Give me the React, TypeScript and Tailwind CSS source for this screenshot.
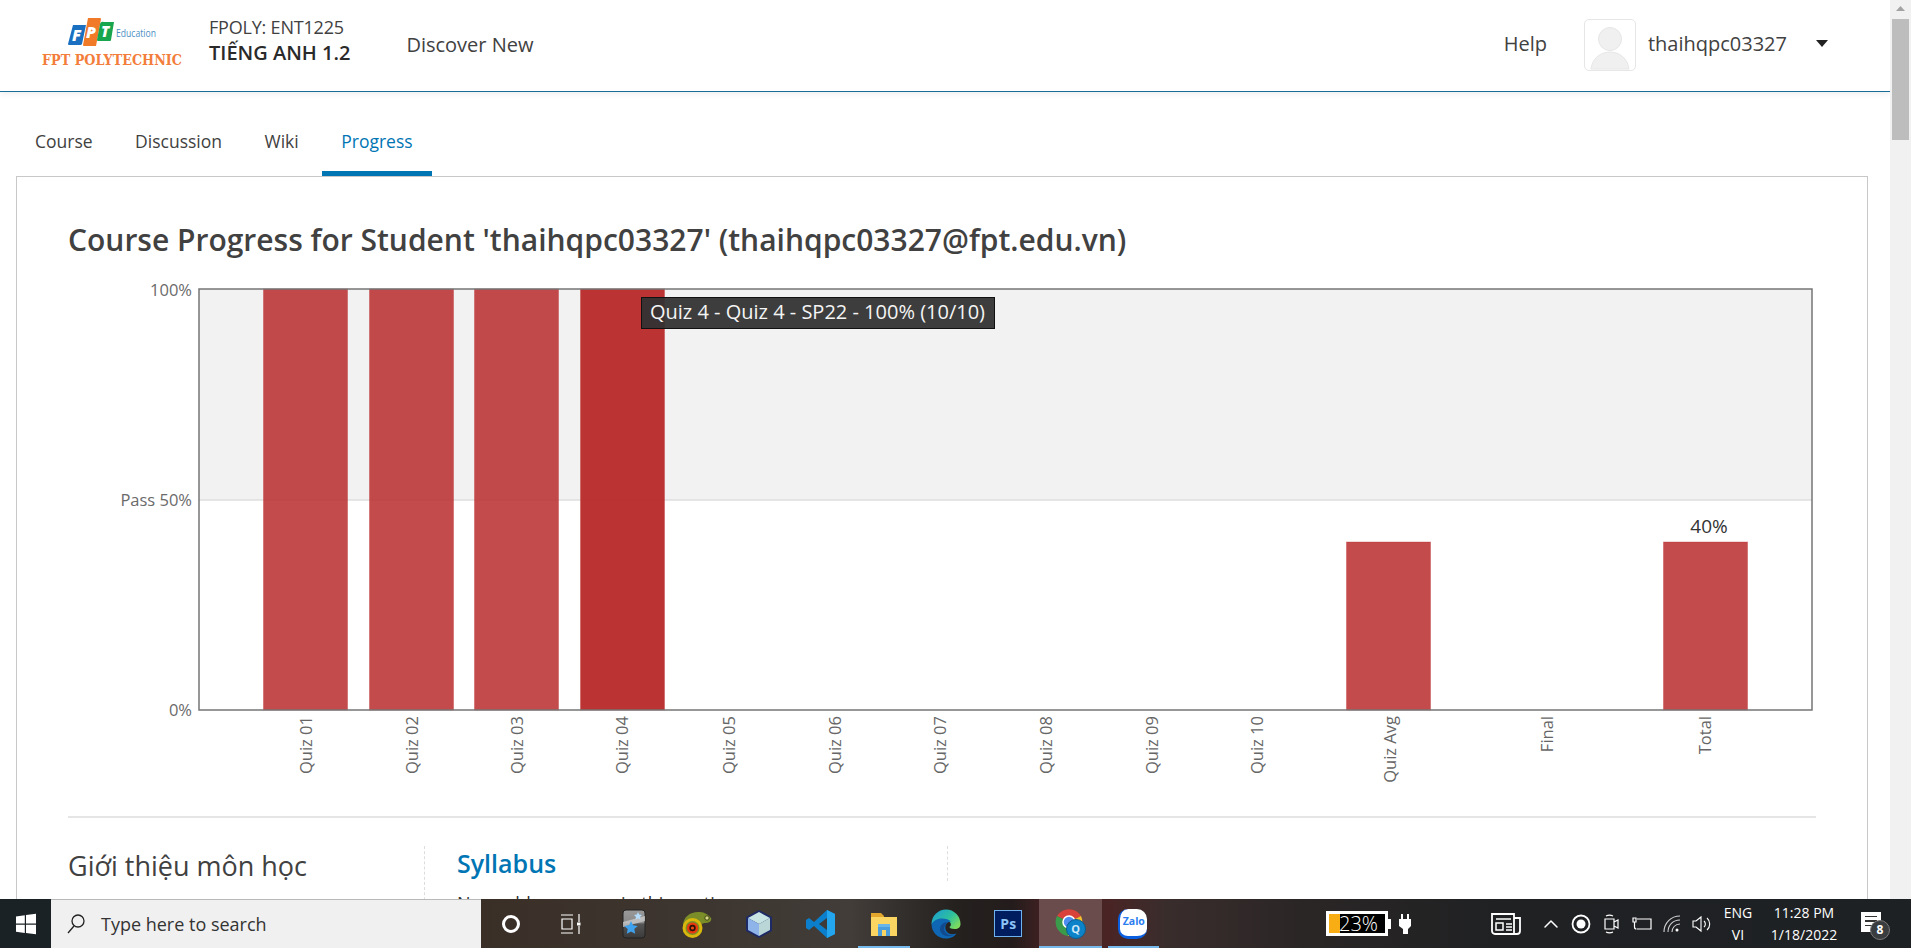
import React from 'react';
import { ChevronUp } from 'lucide-react';

const quizBars = [
  { label: 'Quiz 01', labelX: 306, x: 263, pct: 100 },
  { label: 'Quiz 02', labelX: 412, x: 369, pct: 100 },
  { label: 'Quiz 03', labelX: 517, x: 474, pct: 100 },
  { label: 'Quiz 04', labelX: 622, x: 580, pct: 100, hover: true },
  { label: 'Quiz 05', labelX: 729, x: 686, pct: 0 },
  { label: 'Quiz 06', labelX: 835, x: 792, pct: 0 },
  { label: 'Quiz 07', labelX: 940, x: 897, pct: 0 },
  { label: 'Quiz 08', labelX: 1046, x: 1003, pct: 0 },
  { label: 'Quiz 09', labelX: 1152, x: 1109, pct: 0 },
  { label: 'Quiz 10', labelX: 1257, x: 1214, pct: 0 },
  { label: 'Quiz Avg', labelX: 1390, x: 1346, pct: 40 },
  { label: 'Final', labelX: 1547, x: 1505, pct: 0 },
  { label: 'Total', labelX: 1705, x: 1663, pct: 40 },
];

const Logo = () => (
  <svg width="142" height="54" viewBox="42 14 142 54" className="shrink-0 -mt-[9px]">
    <path d="M73 25h13l-4 19a2 2 0 0 1-2 1H69a1 1 0 0 1-1-1z" fill="#1b6fc0" />
    <path d="M88 18h12a1 1 0 0 1 1 1l-5 27H84a1 1 0 0 1-1-1z" fill="#f07a28" />
    <path d="M104 22h10l-3 18a1 1 0 0 1-1 1H98a1 1 0 0 1-1-1l3-16a3 3 0 0 1 4-2z" fill="#17a54e" />
    <text x="72" y="41" fontSize="16" fontWeight="800" fontStyle="italic" fill="#fff">F</text>
    <text x="86" y="38" fontSize="16" fontWeight="800" fontStyle="italic" fill="#fff">P</text>
    <text x="101" y="37" fontSize="15" fontWeight="800" fontStyle="italic" fill="#fff">T</text>
    <text x="116" y="37" fontSize="11.5" fill="#4b8fc4" textLength="40" lengthAdjust="spacingAndGlyphs">Education</text>
    <text x="42" y="65" fontSize="14" fontWeight="700" fill="#f37d3b" textLength="140" lengthAdjust="spacingAndGlyphs" fontFamily="'DejaVu Serif', serif">FPT POLYTECHNIC</text>
  </svg>
);

const Header = () => (
  <header className="h-[92px] shrink-0 border-b-[1.5px] border-[#1a6d96] shadow-[0_2px_6px_rgba(0,0,0,0.07)] flex items-center pl-[42px] pr-[62px] text-[#313131]">
    <Logo />
    <div className="ml-[25px] flex flex-col -mt-[12px]">
      <span className="text-[18px] leading-[26px] tracking-[-0.2px] text-[#414141]">FPOLY: ENT1225</span>
      <span className="text-[20px] leading-[26px] font-semibold text-[#2a2a2a]">TIẾNG ANH 1.2</span>
    </div>
    <a className="ml-[56px] -mt-[1px] text-[20px] text-[#414141]">Discover New</a>
    <a className="ml-auto -mt-[3px] text-[20px] text-[#414141]">Help</a>
    <div className="ml-[37px] -mt-[2px] w-[52px] h-[52px] rounded-[5px] border border-[#e6e6e6] overflow-hidden flex items-end justify-center">
      <svg width="42" height="44" viewBox="0 0 42 44">
        <circle cx="21" cy="13" r="11.5" fill="#f0f0f0" stroke="#e6e6e6" />
        <path d="M2 43c1-10 9-17 19-17s18 7 19 17z" fill="#f0f0f0" stroke="#e6e6e6" />
      </svg>
    </div>
    <span className="ml-[12px] -mt-[3px] text-[20px] text-[#414141]">thaihqpc03327</span>
    <svg width="12" height="8" viewBox="0 0 12 8" className="ml-[29px] -mt-[3px]">
      <path d="M0 0h12L6 7z" fill="#222" />
    </svg>
  </header>
);

const Tabs = () => {
  const tabs = ['Course', 'Discussion', 'Wiki', 'Progress'];
  return (
    <nav className="h-[84px] shrink-0 flex pl-[16px] gap-[4.5px]">
      {tabs.map((t) => (
        <a
          key={t}
          className={
            t === 'Progress'
              ? 'px-[19px] pt-[37px] pb-[18px] border-b-[5px] border-[#0075b4] text-[#0075b4] text-[17.5px] leading-[24px]'
              : 'px-[19px] pt-[37px] pb-[18px] border-b-[5px] border-transparent text-[#414141] text-[17.5px] leading-[24px]'
          }
        >
          {t}
        </a>
      ))}
    </nav>
  );
};

const Chart = () => (
  <div className="relative w-[1748px] h-[516px] mt-[22px]">
    <svg width="1748" height="516" viewBox="68 280 1748 516" className="block">
      <rect x="199" y="289" width="1613" height="211" fill="#f2f2f3" />
      <line x1="199" y1="500" x2="1812" y2="500" stroke="#dedede" strokeWidth="1.5" />
      {quizBars.filter((b) => b.pct > 0).map((b) => {
        const h = b.pct === 100 ? 421 : 168;
        return (
          <rect
            key={b.label}
            x={b.x + 0.5}
            y={710 - h}
            width="84"
            height={h}
            fill="#b92c2c"
            fillOpacity={b.hover ? 0.97 : 0.85}
            stroke="#b92c2c"
            strokeOpacity="0.35"
          />
        );
      })}
      <rect x="199" y="289" width="1613" height="421" fill="none" stroke="#757575" strokeWidth="1.5" />
      <g fontSize="16.5" fill="#6a6a6a" textAnchor="end">
        <text x="192" y="296">100%</text>
        <text x="192" y="506">Pass 50%</text>
        <text x="192" y="716">0%</text>
      </g>
      <g fontSize="16.5" fill="#666">
        {quizBars.map((b) => (
          <text
            key={b.label}
            x={b.labelX + 6}
            y="716"
            textAnchor="end"
            transform={`rotate(-90 ${b.labelX + 6} 716)`}
          >
            {b.label}
          </text>
        ))}
      </g>
      <text x="1709" y="533" fontSize="19" fill="#333" textAnchor="middle">40%</text>
    </svg>
    <div className="absolute left-[573px] top-[17px] w-[354px] h-[32px] bg-[#333]/95 border border-[#111] text-[#f4f4f4] text-[20px] leading-[28px] pl-[8px] whitespace-nowrap">
      Quiz 4 - Quiz 4 - SP22 - 100% (10/10)
    </div>
  </div>
);

const Card = () => (
  <section className="ml-[16px] mr-[22px] flex-1 border border-[#c8c8c8] border-b-0 pl-[51px] pr-[51px] pt-[45px] overflow-hidden">
    <h1 className="text-[30px] leading-[36px] font-semibold text-[#414141] whitespace-nowrap">
      Course Progress for Student 'thaihqpc03327' (thaihqpc03327@fpt.edu.vn)
    </h1>
    <Chart />
    <hr className="mt-[20px] border-0 h-[2px] bg-[#e5e5e5]" />
    <div className="mt-[28px] flex">
      <div className="w-[357px] shrink-0 border-r border-dashed border-[#ddd] h-[80px]">
        <h2 className="text-[27px] leading-[40px] text-[#414141]">Giới thiệu môn học</h2>
      </div>
      <div>
        <div className="w-[523px] h-[35px] border-r border-dashed border-[#ddd] pl-[32px]">
          <h3 className="text-[25px] leading-[35px] font-semibold text-[#0075b4]">Syllabus</h3>
        </div>
        <p className="mt-[9px] pl-[32px] text-[18px] leading-[27px] text-[#313131]">No problem scores in this section</p>
      </div>
    </div>
  </section>
);

const Scrollbar = () => (
  <div className="w-[21px] shrink-0 bg-[#f1f1f1] flex flex-col items-center">
    <svg width="11" height="19" viewBox="0 0 11 19">
      <path d="M5.5 6l4.5 5H1z" fill="#a3a3a3" />
    </svg>
    <div className="w-[17px] h-[121px] bg-[#bdbdbd]" />
  </div>
);

const WinLogo = () => (
  <svg width="22" height="22" viewBox="0 0 22 22">
    <path d="M1 3.5l8.8-1.2v8.2H1zM11 2.1L21 .8v9.7H11zM1 11.7h8.8v8.2L1 18.7zM11 11.7h10v9.5L11 20z" fill="#fff" />
  </svg>
);

const StarIcon = () => (
  <svg width="24" height="30" viewBox="0 0 24 30">
    <defs>
      <linearGradient id="star-box" x1="0" y1="0" x2="0" y2="1">
        <stop offset="0" stopColor="#9a9a9a" />
        <stop offset="0.45" stopColor="#8a8a8a" />
        <stop offset="0.5" stopColor="#555" />
        <stop offset="1" stopColor="#3a3a3a" />
      </linearGradient>
    </defs>
    <rect x="1" y="1" width="22" height="28" rx="3" fill="url(#star-box)" stroke="#222" />
    <path d="M1 13L23 7v5L1 18z" fill="#c9c9c9" fillOpacity="0.8" />
    <path d="M16 3l1.200 2.600 2.800.3-2 2 .5 2.800-2.500-1.400-2.500 1.400.5-2.800-2-2 2.800-.3z" fill="#b4dcfa" />
    <path d="M9 12l2 4.300 4.700.6-3.400 3.200.9 4.700L9 22.500l-4.200 2.300.9-4.700-3.400-3.200 4.700-.6z" fill="#3ea2ee" />
  </svg>
);

const ChameleonIcon = () => (
  <svg width="30" height="30" viewBox="0 0 30 30">
    <path d="M1 17C1 8 8 3 16 3c5 0 9 1 13 6 1 2-1 5-5 5-2 0-3 0-4 1-1-1-10-3-12 2z" fill="#7b8d28" />
    <circle cx="10.500" cy="19" r="10" fill="#d9b80d" />
    <circle cx="10.500" cy="19" r="7" fill="#7b8d28" />
    <circle cx="10.500" cy="19" r="5.600" fill="#e8380f" />
    <circle cx="10.500" cy="19" r="3.200" fill="#2a1208" />
    <circle cx="10.500" cy="19" r="1.600" fill="#ec4a14" />
    <circle cx="25" cy="9" r="2.200" fill="#d8d48a" stroke="#3c4511" />
  </svg>
);

const CubeIcon = () => (
  <svg width="28" height="30" viewBox="0 0 28 30">
    <path d="M14 1l13 7v14l-13 7-13-7V8z" fill="#1e2a66" />
    <path d="M14 3L25 9l-11 6L3 9z" fill="#c7e3e3" />
    <path d="M3 9l11 6v12L3 21z" fill="#8fb4ea" />
    <path d="M25 9v12l-11 6V15z" fill="#bad6d6" />
  </svg>
);

const VsCodeIcon = () => (
  <svg width="30" height="30" viewBox="0 0 30 30">
    <path d="M21 1l8 4v20l-8 4L8 17l-5 4-3-2 0-8 3-2 5 4z" fill="#0b7fcb" />
    <path d="M21 1l8 4v20l-8 4z" fill="#23a6ee" />
    <path d="M21 9v12l-8-6z" fill="#3d3a37" />
  </svg>
);

const FolderIcon = () => (
  <svg width="28" height="28" viewBox="0 0 28 28">
    <path d="M1 3h10l3 3v4H1z" fill="#e3a72e" />
    <path d="M1 7h26v19H1z" fill="#fbd561" />
    <path d="M8 14h12v12h-4v-6h-4v6H8z" fill="#4a9edb" />
    <path d="M8 14h12v3H8z" fill="#69b7ea" />
  </svg>
);

const EdgeIcon = () => (
  <svg width="30" height="30" viewBox="0 0 30 30">
    <defs>
      <linearGradient id="edge-a" x1="0" y1="0" x2="1" y2="0.700">
        <stop offset="0" stopColor="#1a9ad8" />
        <stop offset="0.6" stopColor="#2dbf9e" />
        <stop offset="1" stopColor="#7cdb5e" />
      </linearGradient>
    </defs>
    <path d="M.5 15A14.500 14.500 0 0 1 29.500 15c0 3-2 5-6 5-3 0-5-1-5-2 1-1 2-2 1-4-2-3-8-4-12 0-3 2-6 1-7 1z" fill="url(#edge-a)" />
    <path d="M.5 15c0 8 6 14.500 14 14.500 5 0 9-2 11-5-5 2-9 0-10.500-3-2-5 1-9 5-9-4-4-15-5-19.500 2.500z" fill="#0f67b4" />
    <path d="M9 21c1 5 7 8 14 5-5 1-8-1-9.500-4-1-3 0-7 4-9-5 0-9 3-8.500 8z" fill="#114a8e" />
  </svg>
);

const PsIcon = () => (
  <div className="w-[28px] h-[27px] bg-[#001d5f] border-[1.5px] border-[#6fb2ef] flex items-center justify-center text-[#8cc4f5] text-[14px] font-bold leading-none">
    Ps
  </div>
);

const ChromeIcon = () => (
  <div className="relative w-[32px] h-[32px] mt-[1px]">
    <svg width="28" height="28" viewBox="0 0 28 28" className="absolute left-0 top-0">
      <path d="M14 14L2 8a14 14 0 0 1 24 0z" fill="#d9423a" />
      <path d="M14 14L26 8a14 14 0 0 1-13 20z" fill="#f2c12e" />
      <path d="M14 14L13 28A14 14 0 0 1 2 8z" fill="#3a9b4a" />
      <circle cx="14" cy="14" r="6" fill="#4d8df0" stroke="#fff" strokeWidth="1.500" />
    </svg>
    <div className="absolute left-[11px] top-[11px] w-[20px] h-[20px] rounded-full bg-[#0c83c9] border border-[#0a5d8f] flex items-center justify-center text-[#cfe9fa] text-[11px] font-bold">
      Q
    </div>
  </div>
);

const ZaloIcon = () => (
  <div className="relative w-[29px] h-[30px] bg-white rounded-[10px] border-b-[3px] border-l-[2px] border-[#0a5fe0] flex items-center justify-center text-[#2c7ef0] text-[10.500px] font-bold leading-none pb-[2px]">
    Zalo
  </div>
);

const taskIcons: { key: string; node: React.ReactNode; running?: boolean; active?: boolean }[] = [
  { key: 'task', node: (
    <svg width="22" height="20" viewBox="0 0 22 20" fill="none" stroke="#fff" strokeWidth="1.200">
      <path d="M0 1h12M0 19h12M1 5h10v10H1zM18 0v8M18 12v8" />
      <rect x="16" y="8.500" width="3.500" height="3" fill="#fff" stroke="none" />
    </svg>
  ) },
  { key: 'star', node: <StarIcon /> },
  { key: 'chameleon', node: <ChameleonIcon /> },
  { key: 'cube', node: <CubeIcon /> },
  { key: 'vscode', node: <VsCodeIcon /> },
  { key: 'folder', node: <FolderIcon />, running: true },
  { key: 'edge', node: <EdgeIcon /> },
  { key: 'ps', node: <PsIcon /> },
  { key: 'chrome', node: <ChromeIcon />, active: true },
  { key: 'zalo', node: <ZaloIcon />, running: true },
];

const Tray = () => (
  <div className="ml-auto flex items-center text-white h-full">
    <div className="relative w-[62px] h-[25px] bg-black border-[3px] border-white flex items-center text-[20px] leading-none text-white">
      <div className="w-[11px] h-full bg-[#f9ad14] shrink-0" />
      <span className="-ml-[1px] font-light">23%</span>
      <div className="absolute -right-[6px] top-[5px] w-[3px] h-[10px] bg-white" />
    </div>
    <svg width="12" height="20" viewBox="0 0 12 20" className="ml-[11px] mr-[80px]">
      <path d="M2 0h2v5H2zM8 0h2v5H8zM0 5h12v7l-3 3v5H4v-5l-4-3z" fill="#fff" />
    </svg>
    <svg width="30" height="24" viewBox="0 0 30 24" fill="none" stroke="#fff" strokeWidth="1.800">
      <path d="M1 2h22v20H4a3 3 0 0 1-3-3zM23 6h6v13a3 3 0 0 1-3 3h-3" />
      <path d="M5 7h15M5 11h7v7H5zM15 12h6M15 15h6M15 18h6" strokeWidth="1.500" />
    </svg>
    <ChevronUp className="ml-[18px] w-[24px] h-[24px]" strokeWidth={1.500} />
    <svg width="20" height="20" viewBox="0 0 20 20" className="ml-[8px]">
      <circle cx="10" cy="10" r="8.500" fill="none" stroke="#fff" strokeWidth="1.800" />
      <circle cx="10" cy="10" r="4.500" fill="#fff" />
    </svg>
    <svg width="16" height="24" viewBox="0 0 16 24" fill="none" stroke="#fff" strokeWidth="1.200" className="ml-[13px]">
      <path d="M1 7h9v10H1zM10 10l4-2v8l-4-2M2 4a8 8 0 0 1 7 0M2 20a8 8 0 0 0 7 0" />
    </svg>
    <svg width="20" height="16" viewBox="0 0 20 16" fill="none" stroke="#fff" strokeWidth="1.200" className="ml-[12px]">
      <path d="M5 3h14v10H5M1 2v4h3V2zM2.500 6v5a2 2 0 0 0 2 2" />
    </svg>
    <svg width="18" height="18" viewBox="0 0 18 18" fill="none" stroke="#fff" strokeWidth="1.100" className="ml-[11px]">
      <path d="M1 17C1 8 8 1 17 1M5 17C5 10 10 5 17 5M9 17c0-4 3-8 8-8" strokeOpacity="0.8" />
      <circle cx="14" cy="15" r="1.500" fill="#fff" stroke="none" />
    </svg>
    <svg width="20" height="18" viewBox="0 0 20 18" fill="none" stroke="#fff" strokeWidth="1.100" className="ml-[11px]">
      <path d="M1 6h3l5-4v14l-5-4H1zM12 6a4 4 0 0 1 0 6M15 3a8 8 0 0 1 0 12" />
    </svg>
    <div className="ml-[8px] w-[36px] flex flex-col items-center text-[14px] leading-[22px]">
      <span>ENG</span>
      <span>VI</span>
    </div>
    <div className="ml-[10px] w-[76px] flex flex-col items-center text-[14px] leading-[22px] whitespace-nowrap">
      <span>11:28 PM</span>
      <span>1/18/2022</span>
    </div>
    <div className="relative ml-[19px] mr-[30px] w-[20px] h-[20px] bg-white -mt-[4px] flex flex-col gap-[3px] px-[4px] pt-[4px]">
      <div className="h-[1.500px] bg-[#333]" />
      <div className="h-[1.500px] bg-[#333]" />
      <div className="h-[1.500px] bg-[#333]" />
      <div className="absolute left-[9px] top-[8px] w-[20px] h-[20px] rounded-full bg-[#3a3d3f] border border-[#777] flex items-center justify-center text-white text-[12px] font-bold">
        8
      </div>
    </div>
  </div>
);

const Taskbar = () => (
  <footer className="h-[49px] shrink-0 flex items-stretch bg-[linear-gradient(90deg,#3a2f27_25%,#3d3630_37%,#423d39_44.5%,#24211f_50%,#241c1c_53%,#3d2021_54.4%,#4a2425_58%,#392d2c_61%,#2b2626_68%,#1f2123_78.5%,#1e2124_100%)]">
    <div className="w-[51px] bg-[#1b2226] flex items-center justify-center">
      <WinLogo />
    </div>
    <div className="w-[430px] bg-[#f0f0f0] border-t border-[#b9b9b9] flex items-center pl-[16px] gap-[16px] text-[#333]">
      <svg width="18" height="20" viewBox="0 0 18 20" fill="none" stroke="#222" strokeWidth="1.300">
        <circle cx="11" cy="7" r="6" />
        <path d="M7 12L1 19" />
      </svg>
      <span className="text-[18px]">Type here to search</span>
    </div>
    <div className="w-[60px] flex items-center justify-center">
      <div className="w-[18px] h-[18px] rounded-full border-[3px] border-white" />
    </div>
    {taskIcons.map((i) => (
      <div
        key={i.key}
        className={i.active ? 'relative w-[62.3px] flex items-center justify-center bg-[#6a4c4c]' : 'relative w-[62.3px] flex items-center justify-center'}
      >
        {i.node}
        {i.active && <div className="absolute left-0 right-0 bottom-0 h-[2px] bg-[#76b9ed]" />}
        {i.running && <div className="absolute left-[6px] right-[5px] bottom-0 h-[2px] bg-[#76b9ed]" />}
      </div>
    ))}
    <Tray />
  </footer>
);

const App: React.FC = () => {
  return (
    <div className="w-[1911px] h-[948px] overflow-hidden flex flex-col bg-white font-['Open_Sans','Noto_Sans',sans-serif]">
      <div className="flex h-[899px] shrink-0">
        <main className="flex-1 min-w-0 flex flex-col overflow-hidden">
          <Header />
          <Tabs />
          <Card />
        </main>
        <Scrollbar />
      </div>
      <Taskbar />
    </div>
  );
};

export default App;
